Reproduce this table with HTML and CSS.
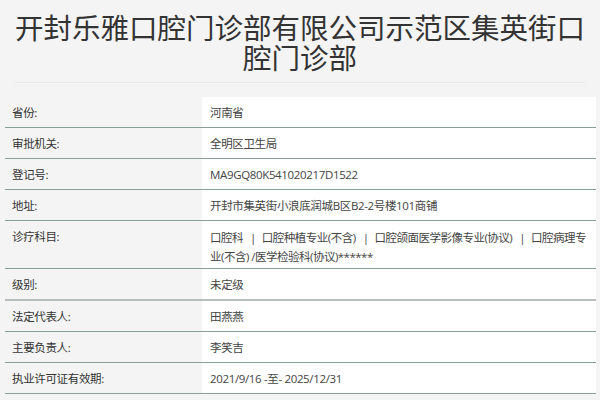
FILE: index.html
```html
<!DOCTYPE html>
<html lang="zh">
<head>
<meta charset="utf-8">
<link rel="stylesheet" href="styles.css">
</head>
<body>
<div class="page">
  <h1 class="title">开封乐雅口腔门诊部有限公司示范区集英街口腔门诊部</h1>
  <div class="rule"></div>
  <table class="info">
    <tr><th>省份:</th><td>河南省</td></tr>
    <tr><th>审批机关:</th><td>全明区卫生局</td></tr>
    <tr><th>登记号:</th><td>MA9GQ80K541020217D1522</td></tr>
    <tr><th>地址:</th><td>开封市集英街小浪底润城B区B2-2号楼101商铺</td></tr>
    <tr><th>诊疗科目:</th><td class="scope">口腔科<span class="sep">|</span>口腔种植专业(不含)<span class="sep">|</span>口腔颌面医学影像专业(协议)<span class="sep">|</span>口腔病理专业(不含) /医学检验科(协议)******</td></tr>
    <tr class="gray"><th>级别:</th><td>未定级</td></tr>
    <tr><th>法定代表人:</th><td>田燕燕</td></tr>
    <tr><th>主要负责人:</th><td>李笑吉</td></tr>
    <tr><th>执业许可证有效期:</th><td>2021/9/16 -至- 2025/12/31</td></tr>
  </table>
</div>
</body>
</html>
```

FILE: styles.css
```css
html, body {
  margin: 0;
  padding: 0;
  background: #f4f4f4;
}
.page {
  width: 600px;
  height: 400px;
  overflow: hidden;
  font-family: "Open Sans", "Noto Sans CJK SC", sans-serif;
}
.title {
  margin: 0;
  padding: 12px 5px 0;
  font-family: "Noto Sans CJK SC", sans-serif;
  font-size: 28.5px;
  line-height: 30px;
  font-weight: 400;
  color: #333;
  text-align: center;
}
.rule {
  margin: 10px 15px 0;
  height: 1px;
  background: #e8e8e8;
}
.info {
  margin: 14px 0 0 5px;
  width: 591px;
  border-collapse: collapse;
  font-size: 11.5px;
  letter-spacing: -0.35px;
}
.info th,
.info td {
  padding: 7px 6px 2px 8px;
  height: 21px;
  vertical-align: top;
  line-height: 18px;
  border-bottom: 1px solid #87a197;
}
.info th {
  width: 184px;
  padding-left: 7px;
  text-align: left;
  font-weight: 400;
  color: #333;
  background: #f4f4f4;
}
.info td {
  background: #fff;
  color: #444;
}
.info td.scope {
  letter-spacing: -0.5px;
  line-height: 19px;
}
.info tr.gray th,
.info tr.gray td {
  border-bottom: 2px solid #b9bdbb;
}
.sep {
  margin: 0 6px 0 7px;
  color: #444;
}
```
